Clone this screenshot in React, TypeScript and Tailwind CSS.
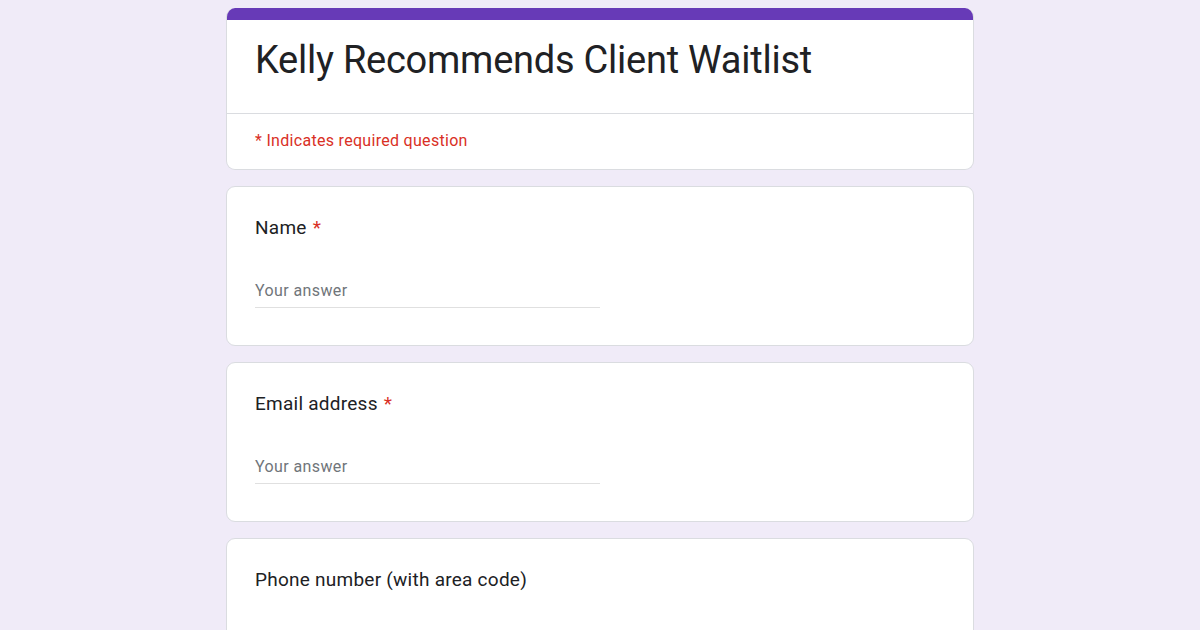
import type { ReactElement } from "react";

const sans = "font-['Roboto','Liberation_Sans',sans-serif]";

function QuestionCard({ label, required }: { label: string; required?: boolean }): ReactElement {
  return (
    <div className="h-[160px] rounded-[9px] border border-[#dadce0] bg-white px-[28px] pt-[29px]">
      <div className={`text-[19px] leading-[24px] tracking-[0.25px] text-[#202124] ${sans}`}>
        {label}
        {required && <span className="ml-[6px] text-[#d93025]">*</span>}
      </div>
      <div className="mt-[38px] w-[345px] border-b border-[#e0e0e0] pb-[5px]">
        <span className={`text-[16px] leading-[20px] tracking-[0.4px] text-[#70757a] ${sans}`}>
          Your answer
        </span>
      </div>
    </div>
  );
}

export default function App(): ReactElement {
  return (
    <div className="min-h-screen bg-[#f0ebf8] pt-[8px]">
      <div className="mx-auto flex w-[748px] flex-col gap-[16px]">
        <div className="overflow-hidden rounded-[9px] border border-t-0 border-[#dadce0] bg-white">
          <div className="h-[12px] bg-[#673ab7]" />
          <div className="h-[94px] border-b border-[#dadce0] px-[28px] pt-[16px]">
            <h1 className={`text-[38px] leading-[48px] tracking-[-0.25px] text-[#202124] ${sans}`}>
              Kelly Recommends Client Waitlist
            </h1>
          </div>
          <div className={`flex h-[55px] items-center px-[28px] pb-[2px] text-[16px] tracking-[0.3px] text-[#d93025] ${sans}`}>
            * Indicates required question
          </div>
        </div>
        <QuestionCard label="Name" required />
        <QuestionCard label="Email address" required />
        <QuestionCard label="Phone number (with area code)" />
      </div>
    </div>
  );
}
